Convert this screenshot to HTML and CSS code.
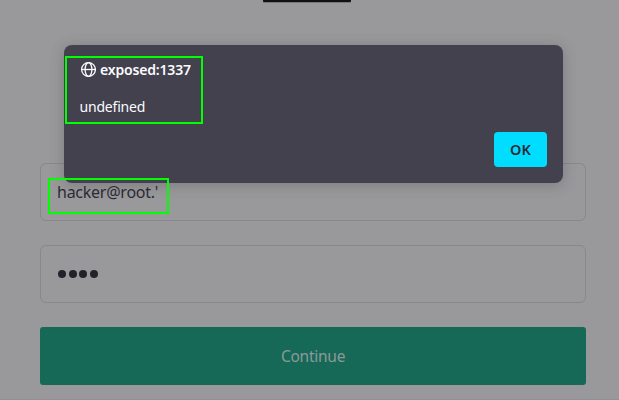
FILE: index.html
```
<!DOCTYPE html>
<html lang="en">
<head>
<meta charset="utf-8">
<title>Login</title>
<link rel="stylesheet" href="styles.css">
</head>
<body>
<div class="logo-edge"></div>
<main class="login-form">
  <div class="field"><span class="email">hacker@root.'</span></div>
  <div class="field dots"><i></i><i></i><i></i><i></i></div>
  <button class="continue">Continue</button>
</main>
<section class="dialog" role="alertdialog">
  <header class="origin">
    <svg class="globe" viewBox="0 0 16 16" fill="none" stroke="currentColor" stroke-width="1.3">
      <circle cx="8.5" cy="8.5" r="6.9"/>
      <ellipse cx="8.5" cy="8.5" rx="3.4" ry="6.9"/>
      <path d="M1.5 8.5h14"/>
    </svg>
    <span>exposed:1337</span>
  </header>
  <p class="message">undefined</p>
  <button class="ok">OK</button>
</section>
<div class="mark mark-dialog"></div>
<div class="mark mark-email"></div>
</body>
</html>
```
FILE: styles.css
```
* {
  box-sizing: border-box;
}

body {
  margin: 0;
  height: 400px;
  position: relative;
  overflow: hidden;
  background: #99999b;
  border-bottom: 1px solid #919193;
  font-family: "Noto Sans", sans-serif;
}

button {
  border: 0;
  padding: 0;
  font-family: inherit;
}

.logo-edge {
  width: 88px;
  height: 2px;
  margin-left: 263px;
  background: #111112;
  border-radius: 0 0 1px 1px;
  box-shadow: 0 1px 0 #77777a;
}

.login-form {
  display: flex;
  flex-direction: column;
  gap: 24px;
  width: 546px;
  margin: 161px 0 0 40px;
}

.field {
  display: flex;
  align-items: center;
  height: 58px;
  padding: 0 16px;
  border: 1px solid #88888b;
  border-radius: 6px;
  color: #2b2b33;
  font-size: 16px;
}

.email {
  line-height: 22px;
  letter-spacing: -0.25px;
}

.dots {
  gap: 2.5px;
  padding-left: 17px;
}

.dots i {
  width: 8px;
  height: 8px;
  border-radius: 50%;
  background: #22222a;
}

.continue {
  height: 58px;
  border-radius: 3px;
  background: #176957;
  color: #8b9997;
  font-size: 15.5px;
  letter-spacing: -0.25px;
}

.dialog {
  position: absolute;
  left: 64px;
  top: 45px;
  width: 499px;
  height: 138px;
  padding: 15px 16px 16px;
  display: flex;
  flex-direction: column;
  border-radius: 8px;
  background: #42414d;
  color: #fbfbfe;
  font-size: 14px;
  box-shadow: 0 2px 14px rgba(58, 57, 68, 0.3);
}

.origin {
  display: flex;
  align-items: center;
  gap: 4px;
  height: 18px;
  font-weight: 600;
  letter-spacing: -0.17px;
}

.globe {
  width: 16px;
  height: 16px;
}

.message {
  margin: 19px 0 0 -0.5px;
  line-height: 20px;
  letter-spacing: -0.2px;
}

.ok {
  align-self: flex-end;
  width: 53px;
  height: 35px;
  margin-top: 15px;
  padding-bottom: 1px;
  border-radius: 4px;
  background: #00ddff;
  color: #2b2a33;
  font-size: 14.5px;
  font-weight: 600;
}

.mark {
  position: absolute;
  border: 2px solid #00ff00;
}

.mark-dialog {
  left: 65px;
  top: 56px;
  width: 138px;
  height: 68px;
}

.mark-email {
  left: 48px;
  top: 178px;
  width: 121px;
  height: 36px;
}
```
